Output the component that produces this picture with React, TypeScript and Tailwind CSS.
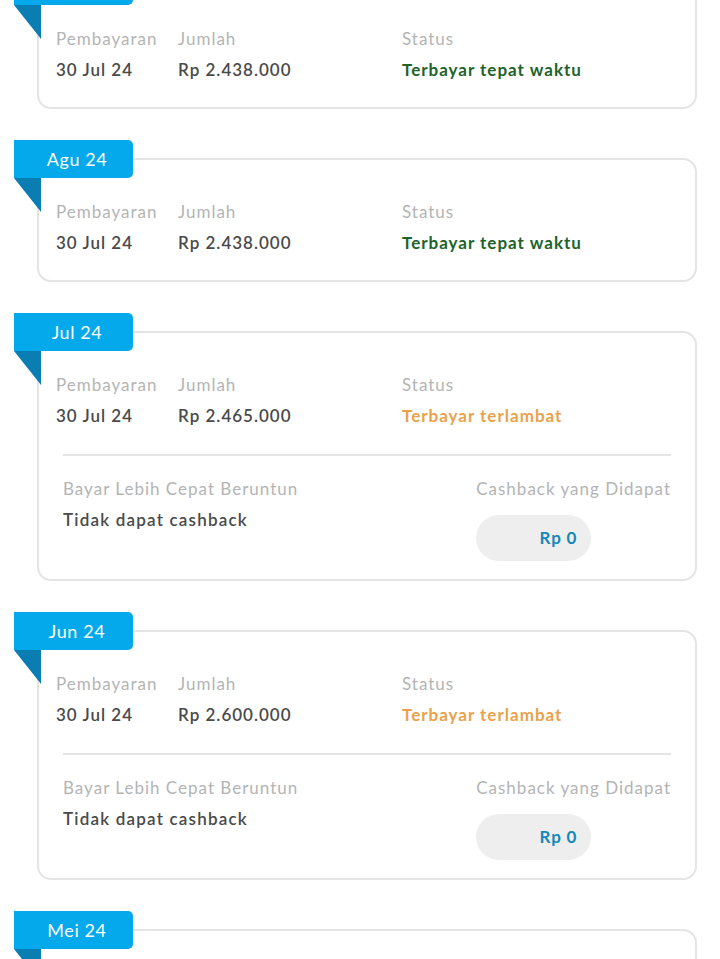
import React from "react";

type Item = {
  month: string;
  date: string;
  amount: string;
  status: string;
  late: boolean;
  cashback?: boolean;
};

const items: Item[] = [
  { month: "Sep 24", date: "30 Jul 24", amount: "Rp 2.438.000", status: "Terbayar tepat waktu", late: false },
  { month: "Agu 24", date: "30 Jul 24", amount: "Rp 2.438.000", status: "Terbayar tepat waktu", late: false },
  { month: "Jul 24", date: "30 Jul 24", amount: "Rp 2.465.000", status: "Terbayar terlambat", late: true, cashback: true },
  { month: "Jun 24", date: "30 Jul 24", amount: "Rp 2.600.000", status: "Terbayar terlambat", late: true, cashback: true },
  { month: "Mei 24", date: "30 Jul 24", amount: "Rp 2.600.000", status: "Terbayar terlambat", late: true, cashback: true },
];

function Card({ it }: { it: Item }) {
  return (
    <div className="relative">
      <div className="relative z-10 ml-[14px] flex h-[38px] w-[119px] items-center justify-center rounded-r-[5px] bg-[#03a9ea] pl-[7px] text-[18px] tracking-[0.6px] text-white">
        {it.month}
        <svg className="absolute left-0 top-full" width="27" height="34" viewBox="0 0 27 34">
          <polygon points="0,0 27,0 27,34" fill="#0a7db2" />
        </svg>
      </div>
      <div className="ml-[37px] mr-[23px] mt-[-20px] rounded-[14px] border-2 border-[#e4e4e4] bg-white">
        <div
          className={
            it.cashback
              ? "grid grid-cols-[122px_224px_1fr] pb-[22px] pl-[17px] pt-[40px]"
              : "grid grid-cols-[122px_224px_1fr] pb-[25px] pl-[17px] pt-[40px]"
          }
        >
          <div className="text-[17px] leading-[24px] tracking-[1px] text-[#b4b4b4]">Pembayaran</div>
          <div className="text-[17px] leading-[24px] tracking-[1px] text-[#b4b4b4]">Jumlah</div>
          <div className="text-[17px] leading-[24px] tracking-[1px] text-[#b4b4b4]">Status</div>
          <div className="mt-[7px] text-[17px] font-semibold leading-[24px] tracking-[1px] text-[#4a4a4a]">{it.date}</div>
          <div className="mt-[7px] text-[17px] font-semibold leading-[24px] tracking-[1px] text-[#4a4a4a]">{it.amount}</div>
          <div
            className={
              it.late
                ? "mt-[7px] text-[17px] font-bold leading-[24px] tracking-[1px] text-[#e9a24c]"
                : "mt-[7px] text-[17px] font-bold leading-[24px] tracking-[1px] text-[#20632a]"
            }
          >
            {it.status}
          </div>
        </div>
        {it.cashback && (
          <div className="px-[24px] pb-[18px]">
            <div className="mt-[4px] h-[2px] bg-[#e4e4e4]" />
            <div className="flex justify-between pt-[21px]">
              <div>
                <div className="text-[17px] leading-[24px] tracking-[1px] text-[#b4b4b4]">Bayar Lebih Cepat Beruntun</div>
                <div className="mt-[7px] text-[17px] font-semibold leading-[24px] tracking-[1.2px] text-[#4a4a4a]">Tidak dapat cashback</div>
              </div>
              <div>
                <div className="text-[17px] leading-[24px] tracking-[1px] text-[#b4b4b4]">Cashback yang Didapat</div>
                <div className="mt-[14px] flex h-[46px] w-[115px] items-center justify-end rounded-full bg-[#eeeeee] pr-[14px] text-[17px] font-bold tracking-[0.8px] text-[#1688b8]">
                  Rp 0
                </div>
              </div>
            </div>
          </div>
        )}
      </div>
    </div>
  );
}

export default function App() {
  return (
    <div
      className="h-[959px] overflow-hidden bg-white"
      style={{ fontFamily: "Lato, 'Noto Sans', sans-serif" }}
    >
      <div className="mt-[-33px] flex flex-col gap-[31px]">
        {items.map((it, i) => (
          <Card key={i} it={it} />
        ))}
      </div>
    </div>
  );
}
